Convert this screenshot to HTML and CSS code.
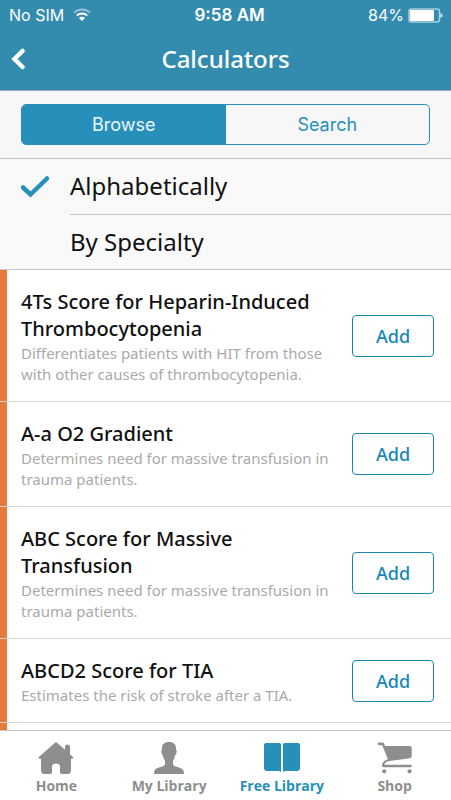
FILE: index.html
```html
<!DOCTYPE html>
<html lang="en">
<head>
<meta charset="utf-8">
<meta name="viewport" content="width=device-width, initial-scale=1">
<title>Calculators</title>
<link rel="stylesheet" href="styles.css">
</head>
<body>
<div class="app">
  <header class="header">
    <div class="status">
      <div class="status-left">
        <span>No SIM</span>
        <svg class="wifi" width="18" height="14" viewBox="0 0 18 14" fill="none" aria-hidden="true">
          <path d="M1 4.6C5.5.4 12.500.4 17 4.600" stroke="#8fc3da" stroke-width="2"/>
          <path d="M3.800 7.600c3-2.700 7.400-2.700 10.400 0" stroke="#fff" stroke-width="2"/>
          <path d="M5.900 9.900c1.800-1.600 4.400-1.600 6.200 0L9 13z" fill="#fff"/>
        </svg>
      </div>
      <span class="time">9:58 AM</span>
      <div class="status-right">
        <span>84%</span>
        <svg width="35" height="15" viewBox="0 0 35 15" fill="none" aria-hidden="true">
          <rect x="1" y="1" width="30.500" height="13" rx="2.500" stroke="#a9d0e2" stroke-width="1.500"/>
          <rect x="2" y="2" width="24" height="11" rx="1" fill="#fff"/>
          <path d="M32.500 5c2.600.8 2.600 4.200 0 5z" fill="#dceef5"/>
        </svg>
      </div>
    </div>
    <div class="navbar">
      <button class="back" type="button" aria-label="Back">
        <svg width="14" height="22" viewBox="0 0 14 22" fill="none" aria-hidden="true"><path d="M11.500 3 3.500 11l8 8" stroke="#fff" stroke-width="4.500" stroke-linecap="round"/></svg>
      </button>
      <h1>Calculators</h1>
    </div>
  </header>
  <div class="segment-bar">
    <div class="segments">
      <button class="segment active" type="button">Browse</button>
      <button class="segment" type="button">Search</button>
    </div>
  </div>
  <div class="sorts">
    <button class="sort" type="button">
      <svg class="check" width="28" height="22" viewBox="0 0 28 22" fill="none" aria-hidden="true"><path d="M2 11.500 9.500 18.500 26 2.500" stroke="#2690ba" stroke-width="4.500" stroke-linecap="round"/></svg>
      <span class="sort-label">Alphabetically</span>
    </button>
    <button class="sort" type="button">
      <span class="check"></span>
      <span class="sort-label">By Specialty</span>
    </button>
  </div>
  <main class="list">
    <article class="item">
      <div class="item-text"><h2>4Ts Score for Heparin-Induced Thrombocytopenia</h2><p>Differentiates patients with HIT from those with other causes of thrombocytopenia.</p></div>
      <button class="add" type="button">Add</button>
    </article>
    <article class="item">
      <div class="item-text"><h2>A-a O2 Gradient</h2><p>Determines need for massive transfusion in trauma patients.</p></div>
      <button class="add" type="button">Add</button>
    </article>
    <article class="item">
      <div class="item-text"><h2>ABC Score for Massive Transfusion</h2><p>Determines need for massive transfusion in trauma patients.</p></div>
      <button class="add" type="button">Add</button>
    </article>
    <article class="item">
      <div class="item-text"><h2>ABCD2 Score for TIA</h2><p>Estimates the risk of stroke after a TIA.</p></div>
      <button class="add" type="button">Add</button>
    </article>
  </main>
  <nav class="tabs">
    <a class="tab" href="#home">
      <svg width="36" height="32" viewBox="0 0 36 32" fill="currentColor" aria-hidden="true"><path d="M17 .8c.7-.6 1.300-.6 2 0l8 7V5c0-3.400 5-3.400 5 0v7.200l2.700 2.500c1 .9.500 2-.7 2h-1V28c0 2.600-1 4-3.500 4H24c-1.500 0-2-.8-2-2v-5.500c0-4-8-4-8 0V30c0 1.200-.5 2-2 2H6.500C4 32 3 30.600 3 28V16.700H1.800c-1.200 0-1.700-1-.7-2z"/></svg>
      <span>Home</span>
    </a>
    <a class="tab" href="#my-library">
      <svg width="30" height="32" viewBox="0 0 30 32" fill="currentColor" aria-hidden="true"><path d="M15 0c5 0 7.400 2.600 7 7.500.9.500.8 2.500.2 4.500-.3 1-.7 1.300-1.200 1.500-.5 2.500-1 4-2 5.300V22c0 1.300 1 2 3.500 2.800C28 26.500 30 27 30 32H0c0-5 2-5.500 7.500-7.200C10 24 11 23.300 11 22v-3.200c-1-1.300-1.500-2.800-2-5.300-.5-.2-.9-.5-1.200-1.500-.6-2-.7-4 .2-4.500C7.600 2.600 10 0 15 0z"/></svg>
      <span>My Library</span>
    </a>
    <a class="tab active" href="#free-library">
      <svg width="36" height="32" viewBox="0 0 36 32" fill="currentColor" aria-hidden="true"><path d="M3 1h12.500L17 2v28l-2-1H3c-2 0-3-1-3-3V3c0-1.500 1-2 3-2zM33 1H20.500L19 2v28l2-1h12c2 0 3-1 3-3V3c0-1.500-1-2-3-2z"/></svg>
      <span>Free Library</span>
    </a>
    <a class="tab" href="#shop">
      <svg width="36" height="32" viewBox="0 0 36 32" fill="currentColor" aria-hidden="true"><path d="M2 .5h3.500c.8 0 1.200.3 1.500 1L8 4h24.500c1.500 0 2.200.8 2.200 2.200V14c0 1.300-.7 2-2.200 2.300L12.500 19c-3.500.6-4.700 1.700-5.200 3.800h26.200c1.700 0 1.700 2.400 0 2.400H6.500c-1.200 0-1.800-.7-1.600-1.800.5-3.200 2.500-5.200 6-6.200L5.200 3.200H2c-1.800 0-1.800-2.700 0-2.700z"/><circle cx="7.200" cy="29.300" r="2.100"/><circle cx="32.600" cy="29.300" r="2.100"/></svg>
      <span>Shop</span>
    </a>
  </nav>
</div>
</body>
</html>
```

FILE: styles.css
```css
* { box-sizing: border-box; }
body { margin: 0; font-family: "Noto Sans", "Open Sans", sans-serif; color: #111; background: #fff; }
button { font: inherit; color: inherit; background: none; border: 0; padding: 0; cursor: pointer; }
h1, h2, p { margin: 0; }
svg { display: block; flex: none; }

.app { display: flex; flex-direction: column; height: 100vh; }

.header { background: #338bae; color: #fff; border-bottom: 1px solid #9bacbd; }
.status {
  display: flex; align-items: center; justify-content: space-between;
  height: 30px; padding: 0 8px 0 9px;
  font: 16px/30px Inter, sans-serif;
}
.status-left, .status-right { display: flex; align-items: center; gap: 9px; }
.status-right { gap: 4px; }
.time { font-size: 17px; font-weight: 600; }
.navbar { display: grid; grid-template-columns: 44px 1fr 44px; align-items: center; height: 60px; padding-bottom: 2px; }
.back { display: flex; align-items: center; height: 44px; padding-left: 11px; }
h1 { font-size: 24px; line-height: 32px; font-weight: 500; text-align: center; }

.segment-bar { padding: 13px 21px; background: #f7f7f7; border-bottom: 1px solid #c5c5cc; }
.segments { display: grid; grid-template-columns: 1fr 1fr; height: 41px; border: 1px solid #2690ba; border-radius: 5px; overflow: hidden; }
.segment { font: 18px/39px Inter, sans-serif; color: #2690ba; }
.segment.active { background: #2690ba; color: #eef6fa; }

.sorts { background: #f9f9f9; border-bottom: 1px solid #c5c5cc; }
.sort { display: flex; align-items: center; width: 100%; padding-left: 21px; text-align: left; }
.check { width: 28px; margin-right: 21px; }
.sort-label { flex: 1; font-size: 24px; line-height: 54px; }
.sort:first-child .sort-label { padding-bottom: 1px; border-bottom: 1px solid #c5c5cc; }

.list { flex: 1; min-height: 0; overflow: hidden; background: linear-gradient(to right, #e67a38 7px, #fff 7px); }
.item { display: flex; align-items: center; gap: 10px; padding: 16px 17px 16px 21px; border-bottom: 1px solid #d5d5d5; }
.item-text { flex: 1; padding-top: 2px; }
h2 { margin-bottom: 1px; font-size: 20px; line-height: 27px; font-weight: 500; }
p { font-size: 15px; line-height: 21px; color: #aaa; }
.add { width: 82px; height: 42px; flex: none; border: 1px solid #1687b5; border-radius: 4px; color: #1687b5; font-size: 18px; font-weight: 500; }

.tabs { display: grid; grid-template-columns: repeat(4, 1fr); height: 70px; padding-top: 11px; border-top: 1px solid #c4c4c4; background: #fff; }
.tab { display: flex; flex-direction: column; align-items: center; gap: 2px; color: #8e8e8e; text-decoration: none; font: 700 14px/20px "Open Sans", sans-serif; }
.tab.active { color: #2690ba; }
```
